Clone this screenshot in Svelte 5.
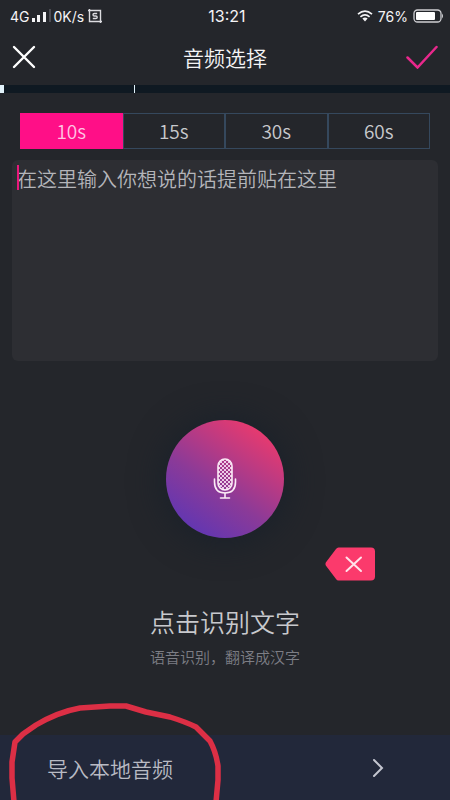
<script>
	const durations = ['10s', '15s', '30s', '60s'];

	let selected = '10s';
	let text = '';

	function clearText() {
		text = '';
	}
</script>

<div class="page">
	<div class="status">
		<div class="status-left">
			<span>4G</span>
			<svg width="20" height="14" viewBox="0 0 20 14">
				<rect x="0" y="9" width="3" height="4" fill="#f4f4f6" />
				<rect x="5" y="6" width="3" height="7" fill="#f4f4f6" />
				<rect x="11" y="3" width="3" height="10" fill="#f4f4f6" />
				<rect x="17" y="0" width="2" height="13" fill="#4b4c53" />
			</svg>
			<span>0K/s</span>
			<svg class="shot" width="14" height="14" viewBox="0 0 14 14" fill="none" stroke="#dcdce0" stroke-width="1.4">
				<path d="M0 1.5H12.5V14M1.5 0V12.5H14" />
				<path d="M9.2 4.5H6.3Q5 4.5 5 5.7Q5 7 6.3 7H7.8Q9.2 7 9.2 8.2Q9.2 9.5 7.8 9.5H4.8" />
			</svg>
		</div>
		<span class="time">13:21</span>
		<div class="status-right">
			<svg width="16" height="12" viewBox="0 0 16 12" fill="none" stroke="#f4f4f6" stroke-width="1.7">
				<path d="M1 4.2Q8-1.8 15 4.2" />
				<path d="M3.4 6.8Q8 3 12.6 6.8" />
				<path d="M5.4 8.6Q8 6.6 10.6 8.6L8 11.6Z" fill="#f4f4f6" stroke="none" />
			</svg>
			<span>76%</span>
			<svg width="31" height="14" viewBox="0 0 31 14">
				<rect x="1" y="1" width="27" height="12" rx="3.5" fill="none" stroke="#d0d0d4" stroke-width="1.3" />
				<rect x="3" y="3" width="19" height="8" rx="1" fill="#fff" />
				<path d="M29 4.5Q31 7 29 9.5Z" fill="#d0d0d4" />
			</svg>
		</div>
	</div>

	<header>
		<button class="icon-btn" aria-label="关闭">
			<svg width="24" height="24" viewBox="0 0 24 24" fill="none" stroke="#fff" stroke-width="2.4" stroke-linecap="round">
				<path d="M2 2L22 22M22 2L2 22" />
			</svg>
		</button>
		<h1>音频选择</h1>
		<button class="icon-btn" aria-label="确定">
			<svg width="32" height="24" viewBox="0 0 32 24" fill="none" stroke="#e8288c" stroke-width="2.5" stroke-linecap="round">
				<path d="M1.5 12.5L11.5 22.5L30.5 2" />
			</svg>
		</button>
	</header>

	<div class="track">
		<span class="handle"></span>
		<span class="mark"></span>
	</div>

	<div class="tabs">
		{#each durations as d}
			<button class:active={selected === d} on:click={() => (selected = d)}>{d}</button>
		{/each}
	</div>

	<div class="editor">
		<textarea bind:value={text} aria-label="文字内容" placeholder="在这里输入你想说的话提前贴在这里"></textarea>
		<span class="caret"></span>
	</div>

	<div class="record">
		<button class="mic" aria-label="点击识别文字">
			<svg width="24" height="42" viewBox="0 0 24 42" fill="none" stroke="#fbeaf6" stroke-width="1.6" stroke-linecap="round">
				<defs>
					<pattern id="mesh" width="4" height="4" patternUnits="userSpaceOnUse">
						<path d="M0 0L4 4M4 0L0 4" stroke="#f6dcf0" stroke-width="0.9" />
					</pattern>
				</defs>
				<rect x="5" y="1" width="14" height="31" rx="7" fill="url(#mesh)" />
				<path d="M1.5 21V24Q1.5 35 12 35Q22.5 35 22.5 24V21" />
				<path d="M12 35V40M7.5 40H16.5" />
			</svg>
		</button>
		<button class="clear" aria-label="清除" on:click={clearText}>
			<svg width="50" height="34" viewBox="0 0 50 34">
				<path d="M13.5 0.5H46Q50 0.5 50 4.5V29.5Q50 33.5 46 33.5H13.5Q12 33.5 11 32L0.8 18.4Q0 17 0.8 15.6L11 2Q12 0.5 13.5 0.5Z" fill="#fb3a6c" />
				<path d="M21.5 10.5L36 24M36 10.5L21.5 24" stroke="#ffe2ea" stroke-width="2" stroke-linecap="round" />
			</svg>
		</button>
	</div>

	<h2>点击识别文字</h2>
	<p>语音识别，翻译成汉字</p>

	<footer>
		<a href="#import">
			<span>导入本地音频</span>
			<svg width="12" height="20" viewBox="0 0 12 20" fill="none" stroke="#c4c6d0" stroke-width="2" stroke-linecap="round">
				<path d="M2 2L10 10L2 18" />
			</svg>
		</a>
		<svg class="scribble" width="224" height="100" viewBox="0 0 224 100" fill="none" stroke="#dc2f45" stroke-width="5.5" stroke-linejoin="round">
			<path d="M14 102L12 78L12 62L15 42L23 34L36 25Q58 12 80 8L110 6L126 6L146 12L170 17Q186 22 196 27L210 41Q216 52 218 66L218 80L216 102" />
		</svg>
	</footer>
</div>

<style>
:global(body) {
	margin: 0;
	background: #24262b;
}

.page {
	display: flex;
	flex-direction: column;
	min-height: 100vh;
	overflow: hidden;
	background: #24262b;
	color: #c8c9cd;
	font-family: "Noto Sans CJK SC", sans-serif;
	font-weight: 350;
}

button {
	border: none;
	padding: 0;
	background: none;
	color: inherit;
	font: inherit;
	cursor: pointer;
}

svg {
	display: block;
	flex: none;
}

.status {
	display: grid;
	grid-template-columns: 1fr auto 1fr;
	align-items: center;
	height: 32px;
	padding: 0 6px 0 10px;
	color: #f4f4f6;
	font-family: Inter, sans-serif;
	font-size: 14px;
	font-weight: 400;
}

.status-left,
.status-right {
	display: flex;
	align-items: center;
}

.status-left {
	gap: 2px;
}

.status-right {
	gap: 5px;
	justify-content: flex-end;
}

.shot {
	margin-left: 2px;
}

.time {
	font-size: 16px;
}

header {
	display: flex;
	align-items: center;
	justify-content: space-between;
	height: 50px;
	padding: 0 12px 3px;
}

.icon-btn {
	display: flex;
	width: 32px;
}

h1 {
	margin: 0;
	color: #f4f4f6;
	font-size: 21px;
	font-weight: 350;
	line-height: 32px;
}

.track {
	display: flex;
	justify-content: space-between;
	height: 8px;
	padding-right: 70%;
	background: #0f1922;
}

.handle {
	width: 4px;
	background: #e2f2fa;
}

.mark {
	width: 1px;
	background: #e2f2fa;
}

.tabs {
	display: grid;
	grid-template-columns: repeat(4, 1fr);
	height: 36px;
	margin: 20px 20px 0;
}

.tabs button {
	border: 1px solid #35485d;
	font-size: 19px;
	line-height: 32px;
}

.tabs .active {
	border-color: #ff0f87;
	background: #ff0f87;
	color: #ffc4e2;
}

.editor {
	position: relative;
	margin: 11px 12px 0;
}

textarea {
	display: block;
	box-sizing: border-box;
	width: 100%;
	height: 201px;
	padding: 4px 5px;
	border: none;
	border-radius: 6px;
	outline: none;
	resize: none;
	background: #2d2e33;
	color: #d0d1d4;
	caret-color: #ff0f87;
	font: inherit;
	font-size: 20px;
	line-height: 30px;
}

textarea::placeholder {
	color: #b4b5ba;
	opacity: 1;
}

.caret {
	position: absolute;
	top: 5px;
	left: 5px;
	width: 2px;
	height: 25px;
	background: #e8187c;
}

.record {
	position: relative;
	display: flex;
	justify-content: center;
	padding: 59px 0 67px;
}

.mic {
	display: flex;
	align-items: center;
	justify-content: center;
	width: 118px;
	height: 118px;
	border-radius: 50%;
	background: linear-gradient(35deg, #5e36b4 10%, #8b3a98 42%, #f23a6a 92%);
	box-shadow: 0 2px 32px 4px #1a212a;
}

/* backspace key beside the microphone */
.clear {
	position: absolute;
	right: calc(50% - 150px);
	bottom: 24px;
}

h2 {
	margin: 0;
	font-size: 25px;
	font-weight: 350;
	line-height: 32px;
	text-align: center;
}

p {
	margin: 8px 0 0;
	color: #7d7e85;
	font-size: 15px;
	line-height: 24px;
	text-align: center;
}

footer {
	position: relative;
	margin-top: auto;
	background: #22283a;
}

footer a {
	display: flex;
	align-items: center;
	justify-content: space-between;
	height: 65px;
	padding: 0 66px 0 47px;
	color: #b9bbc4;
	font-size: 21px;
	text-decoration: none;
}

.scribble {
	position: absolute;
	left: 0;
	bottom: 0;
	pointer-events: none;
}
</style>
